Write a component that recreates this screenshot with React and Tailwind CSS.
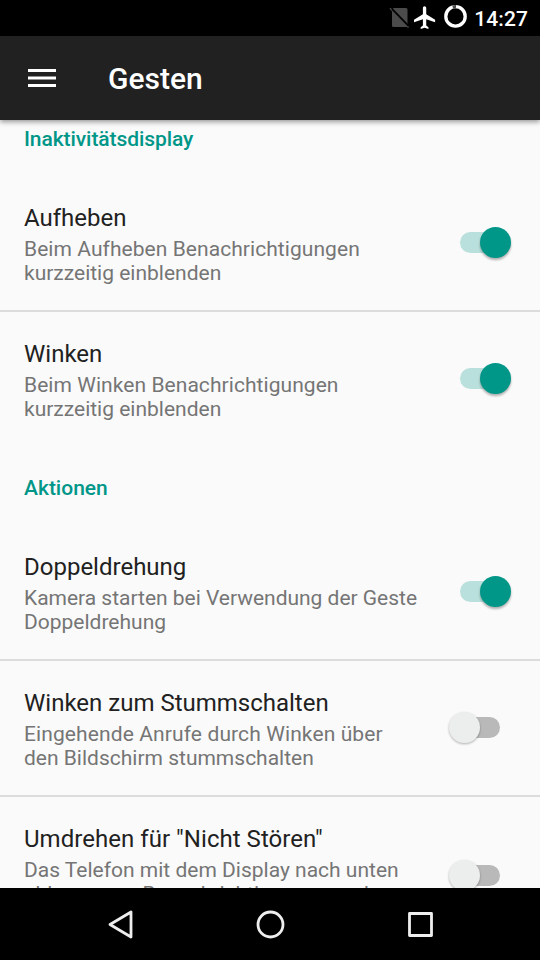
function Toggle({ on }) {
  return (
    <svg className="block h-[40px] w-[72px] shrink-0" viewBox="0 0 72 40">
      {on ? (
        <>
          <rect x="16" y="9" width="40" height="21" rx="10.5" fill="#b9e0dc" />
          <circle cx="51.5" cy="19.5" r="15.5" fill="#009688" className="drop-shadow-[0_2px_1px_rgba(0,0,0,0.3)]" />
        </>
      ) : (
        <>
          <rect x="16" y="9" width="40" height="21" rx="10.5" fill="#b9b9b9" />
          <circle cx="20.5" cy="19.5" r="15.5" fill="#eceeed" className="drop-shadow-[0_1.5px_1px_rgba(0,0,0,0.3)]" />
        </>
      )}
    </svg>
  );
}

function Setting({ title, lines, on = false, divider = false, tracking = "" }) {
  return (
    <div className={divider ? "border-b-2 border-[#dcdcdc]" : ""}>
      <div className="flex items-center pt-[28px] pb-[25px] pl-6">
        <div className="min-w-0 flex-1">
          <div className="pb-[5px] text-[24px] leading-[28px] whitespace-nowrap text-[#212121]">{title}</div>
          {lines.map((line, i) => (
            <div
              key={line}
              className={`text-[21px] leading-[24px] whitespace-nowrap text-[#757575] ${i === 0 ? tracking : ""}`}
            >
              {line}
            </div>
          ))}
        </div>
        <div className="-mt-[3px] mr-6">
          <Toggle on={on} />
        </div>
      </div>
    </div>
  );
}

function Category({ children, className = "" }) {
  return (
    <h2 className={`h-[79px] pt-[30px] pl-6 text-[21px] leading-[24px] font-medium text-[#009688] ${className}`}>
      {children}
    </h2>
  );
}

function StatusBar() {
  return (
    <div className="flex h-9 shrink-0 items-center justify-end bg-black pr-3 text-white">
      <svg className="h-9 w-[93px]" viewBox="0 0 93 36">
        <path d="M12.500 8H25q1.500 0 1.500 1.500V25.500q0 1.500-1.500 1.500H12.500q-1.500 0-1.500-1.500V10Z" fill="#4b4b4b" />
        <path d="M9 8.300 27.500 27.500" stroke="#4b4b4b" strokeWidth="1.500" />
        <path d="M11 8.800 27.500 25.800" stroke="#000" strokeWidth="1.700" />
        <path
          d="M21 16v-2l-8-5V3.500c0-.83-.67-1.500-1.500-1.500S10 2.670 10 3.500V9l-8 5v2l8-2.500V19l-2 1.500V22l3.500-1 3.500 1v-1.500L13 19v-5.500l8 2.500z"
          transform="translate(30.800 3.900) scale(1.110 1.140)"
          fill="#fff"
        />
        <circle cx="74.500" cy="16.400" r="9.700" fill="none" stroke="#fff" strokeWidth="3.300" />
        <path d="M71.700 7.100A9.700 9.700 0 0 1 75 6.700" fill="none" stroke="#4b4b4b" strokeWidth="3.600" />
      </svg>
      <span className="pt-px text-[21px] leading-[24px] font-medium tracking-[0.1px]">14:27</span>
    </div>
  );
}

export default function App() {
  return (
    <div className="flex h-[960px] w-[540px] flex-col overflow-hidden bg-[#fafafa] font-['Roboto',sans-serif]">
      <StatusBar />
      <header className="relative z-10 flex h-[84px] shrink-0 items-center bg-[#212121] pl-7 text-white shadow-[0_2px_5px_rgba(0,0,0,0.4)]">
        <svg className="h-[18px] w-7" viewBox="0 0 28 18" fill="#fff">
          <path d="M0 0h28v3H0ZM0 7.500h28v3H0ZM0 15h28v3H0Z" />
        </svg>
        <h1 className="pt-[2px] pl-[52px] text-[30px] leading-[36px] font-medium">Gesten</h1>
      </header>
      <main className="min-h-0 flex-1 overflow-hidden">
        <div className="-mt-[23px]">
          <Category className="tracking-[-0.08px]">Inaktivitätsdisplay</Category>
          <Setting
            title="Aufheben"
            lines={["Beim Aufheben Benachrichtigungen", "kurzzeitig einblenden"]}
            tracking="tracking-[0.06px]"
            on
            divider
          />
          <Setting
            title="Winken"
            lines={["Beim Winken Benachrichtigungen", "kurzzeitig einblenden"]}
            tracking="tracking-[0.06px]"
            on
          />
          <Category>Aktionen</Category>
          <Setting
            title="Doppeldrehung"
            lines={["Kamera starten bei Verwendung der Geste", "Doppeldrehung"]}
            tracking="tracking-[-0.02px]"
            on
            divider
          />
          <Setting
            title="Winken zum Stummschalten"
            lines={["Eingehende Anrufe durch Winken über", "den Bildschirm stummschalten"]}
            tracking="tracking-[0.11px]"
            divider
          />
          <Setting
            title={<span className="tracking-[0.04px]">Umdrehen für "Nicht Stören"</span>}
            lines={["Das Telefon mit dem Display nach unten", "ablegen, um Benachrichtigungen und", "Anrufe stummzuschalten"]}
          />
        </div>
      </main>
      <nav className="h-[72px] shrink-0 bg-black">
        <svg className="block h-[72px] w-[540px]" viewBox="0 0 540 72" fill="none" stroke="#eee" strokeWidth="2.800" strokeLinejoin="round">
          <path d="M131 24v25l-21-12.500Z" />
          <circle cx="270.500" cy="36.500" r="12.500" />
          <rect x="409.500" y="25.500" width="22" height="22" />
        </svg>
      </nav>
    </div>
  );
}
